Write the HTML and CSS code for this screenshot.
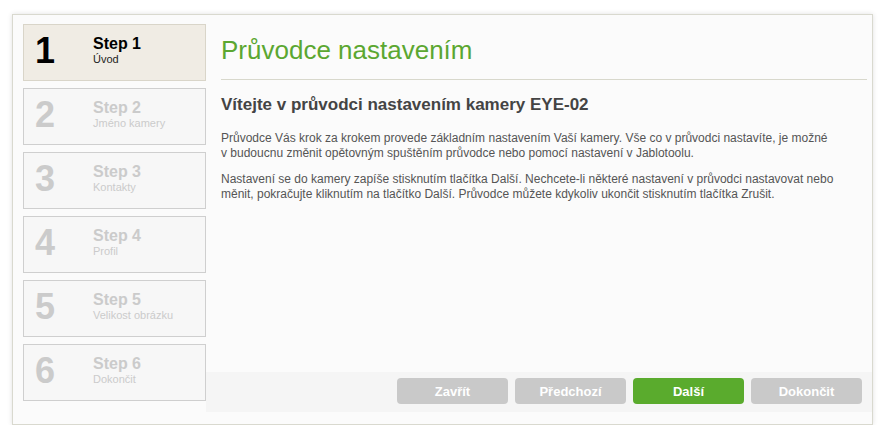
FILE: index.html
```html
<!DOCTYPE html>
<html lang="cs">
<head>
  <meta charset="UTF-8" />
  <title>Průvodce nastavením</title>
  <link rel="stylesheet" href="styles.css">
</head>
<body>
  <div class="wizard">
    <div class="steps">
      <div class="step active"><div class="num">1</div><div class="label"><b>Step 1</b><span>Úvod</span></div></div>
      <div class="step"><div class="num">2</div><div class="label"><b>Step 2</b><span>Jméno kamery</span></div></div>
      <div class="step"><div class="num">3</div><div class="label"><b>Step 3</b><span>Kontakty</span></div></div>
      <div class="step"><div class="num">4</div><div class="label"><b>Step 4</b><span>Profil</span></div></div>
      <div class="step"><div class="num">5</div><div class="label"><b>Step 5</b><span>Velikost obrázku</span></div></div>
      <div class="step"><div class="num">6</div><div class="label"><b>Step 6</b><span>Dokončit</span></div></div>
    </div>
    <div class="main">
      <div class="content">
        <h1>Průvodce nastavením</h1>
        <h2>Vítejte v průvodci nastavením kamery EYE-02</h2>
        <p>Průvodce Vás krok za krokem provede základním nastavením Vaší kamery. Vše co v průvodci nastavíte, je možné<br>v budoucnu změnit opětovným spuštěním průvodce nebo pomocí nastavení v Jablotoolu.</p>
        <p>Nastavení se do kamery zapíše stisknutím tlačítka Další. Nechcete-li některé nastavení v průvodci nastavovat nebo<br>měnit, pokračujte kliknutím na tlačítko Další. Průvodce můžete kdykoliv ukončit stisknutím tlačítka Zrušit.</p>
      </div>
      <div class="buttons">
        <div class="btn">Zavřít</div>
        <div class="btn">Předchozí</div>
        <div class="btn green">Další</div>
        <div class="btn">Dokončit</div>
      </div>
    </div>
  </div>
</body>
</html>
```

FILE: styles.css
```css
* { margin: 0; padding: 0; box-sizing: border-box; }
html, body { background: #fff; font-family: 'Liberation Sans', Arial, sans-serif; }

.wizard {
  display: flex;
  margin: 14px 0 0 12px; width: 861px; height: 411px;
  padding: 9px 0 12px 10px;
  background: #fbfbfb; border: 1px solid #d9d9cf;
  box-shadow: 0 0 5px rgba(0,0,0,0.12);
}

.steps { width: 183px; display: flex; flex-direction: column; gap: 7px; flex-shrink: 0; }
.step {
  height: 57px; display: flex; padding: 7px 0 0 11px;
  background: #f7f7f7; border: 1px solid #cfcfcf; color: #cbcbcb;
}
.step.active { background: #f0ece4; border-color: #d9d5c9; color: #000; }
.num { width: 58px; font-size: 36px; font-weight: bold; line-height: 38px; }
.label { display: flex; flex-direction: column; padding-top: 3px; }
.label b { font-size: 16px; line-height: 18px; }
.label span { font-size: 11px; line-height: 13px; }
.step.active .label span { color: #222; }

.main { flex: 1; display: flex; flex-direction: column; }
.content { flex: 1; padding: 0 5px 0 15px; }
h1 {
  font-size: 26px; font-weight: normal; color: #5ba731;
  line-height: 30px; padding: 11px 0 14px; border-bottom: 1px solid #d8d8cc;
}
h2 { font-size: 17px; color: #444; line-height: 20px; margin: 15px 0 16px; }
p { font-size: 12px; color: #555; line-height: 15px; margin-bottom: 11px; white-space: nowrap; }

.buttons {
  height: 40px; display: flex; justify-content: flex-end; gap: 7px;
  padding: 6px 10px 8px 0; background: #f5f5f5;
}
.btn {
  width: 111px; height: 26px; border-radius: 4px;
  background: #c9c9c9; color: #fff; font-size: 13px; font-weight: bold;
  display: flex; align-items: center; justify-content: center;
}
.btn.green { background: #5aab2d; }
```
